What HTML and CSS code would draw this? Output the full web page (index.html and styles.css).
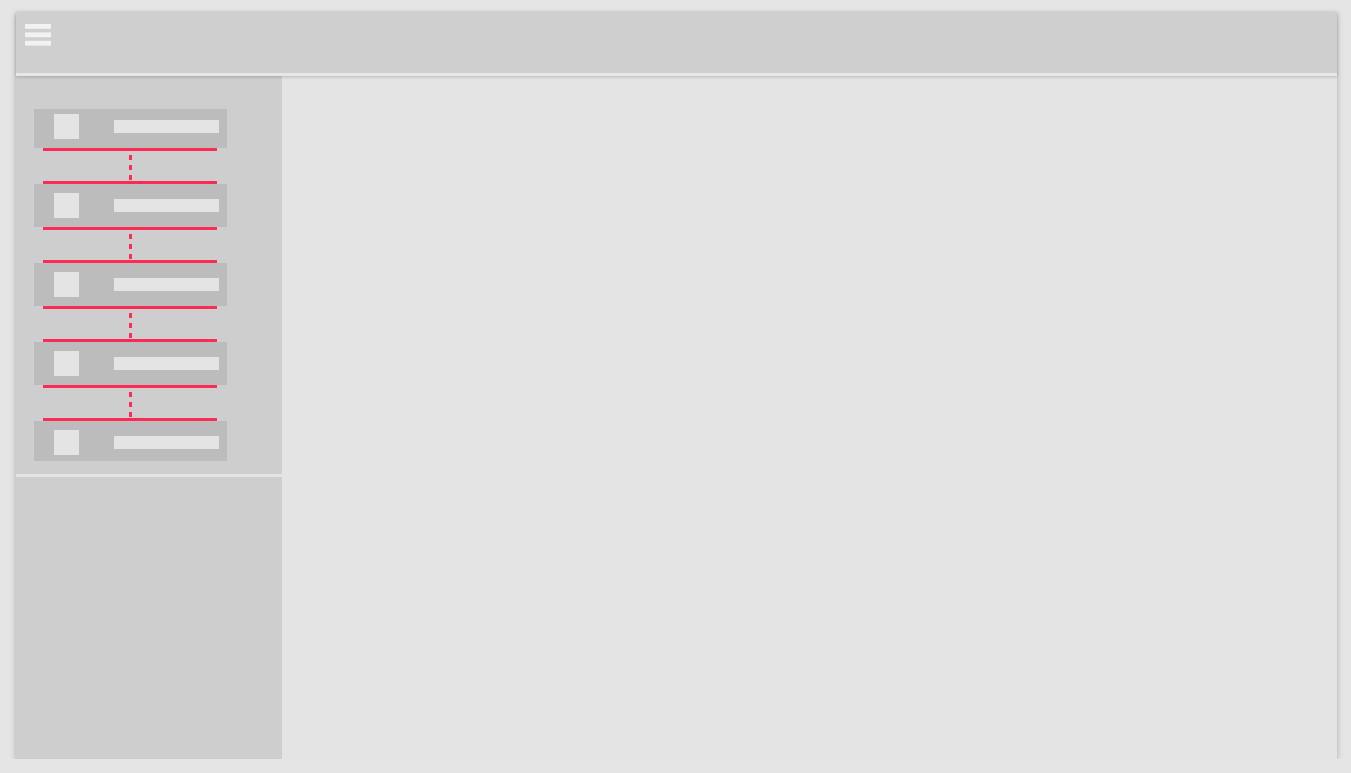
FILE: index.html
```html
<!DOCTYPE html>
<html lang="en">
    <head>
        <title>Steps</title>
        <link rel="stylesheet" href="styles.css">
    </head>
    <body>
        <div class="frame">
            <header class="top-bar">
                <svg class="menu-icon" width="26" height="22" viewBox="0 0 26 22">
                    <rect x="0" y="0" width="26" height="4.8" fill="#f2f2f2"/>
                    <rect x="0" y="8.4" width="26" height="4.8" fill="#f2f2f2"/>
                    <rect x="0" y="16.8" width="26" height="4.8" fill="#f2f2f2"/>
                </svg>
            </header>

            <div class="content">
                <aside class="side-bar">
                    <div class="step-list">
                        <div class="step first">
                            <span class="step-icon"></span>
                            <span class="step-label"></span>
                        </div>
                        <div class="link"></div>
                        <div class="step">
                            <span class="step-icon"></span>
                            <span class="step-label"></span>
                        </div>
                        <div class="link"></div>
                        <div class="step">
                            <span class="step-icon"></span>
                            <span class="step-label"></span>
                        </div>
                        <div class="link"></div>
                        <div class="step">
                            <span class="step-icon"></span>
                            <span class="step-label"></span>
                        </div>
                        <div class="link"></div>
                        <div class="step last">
                            <span class="step-icon"></span>
                            <span class="step-label"></span>
                        </div>
                    </div>
                    <div class="side-rest"></div>
                </aside>

                <main class="main-area"></main>
            </div>
        </div>
    </body>
</html>
```

FILE: styles.css
```css
body{
    margin: 0;
    background-color: #e5e5e5;
    font-family: "Roboto", sans-serif;
}
.frame{
    margin: 12px 0 0 16px;
    width: 1321px;
    height: 747px;
    display: flex;
    flex-direction: column;
    box-shadow: 0px 2px 6px rgba(0,0,0,0.25);
}
.top-bar{
    height: 49px;
    padding: 12px 0 0 9px;
    background-color: #cfcfcf;
    border-bottom: 3px solid #e7e7e7;
    position: relative;
    z-index: 1;
    box-shadow: 0px 1px 3px rgba(0,0,0,0.2);
}
.menu-icon{
    display: block;
}
.content{
    flex: 1;
    display: flex;
}
.side-bar{
    width: 266px;
    background-color: #cecece;
    display: flex;
    flex-direction: column;
    box-shadow: 1px 0px 1px rgba(0,0,0,0.06);
}
.step-list{
    padding: 33px 0 13px 18px;
    border-bottom: 3px solid #e4e4e4;
    display: flex;
    flex-direction: column;
}
.step{
    width: 193px;
    background-color: #bcbcbc;
    display: flex;
    align-items: center;
    padding: 9px 0;
}
.step.first{
    padding-top: 5px;
}
.step.last{
    padding-bottom: 6px;
}
.step-icon{
    width: 25px;
    height: 25px;
    margin-left: 20px;
    background-color: #e4e4e4;
}
.step-label{
    width: 105px;
    height: 13px;
    margin-left: 35px;
    background-color: #e4e4e4;
}
.link{
    width: 174px;
    height: 30px;
    margin-left: 9px;
    border-top: 3px solid #ff2b56;
    border-bottom: 3px solid #ff2b56;
    background: repeating-linear-gradient(to bottom, transparent 0px, transparent 4px, #ff2b56 4px, #ff2b56 9px, transparent 9px, transparent 10px) no-repeat 86px 0 / 3px 100%;
}
.side-rest{
    flex: 1;
}
.main-area{
    flex: 1;
    background-color: #e4e4e4;
}
```
